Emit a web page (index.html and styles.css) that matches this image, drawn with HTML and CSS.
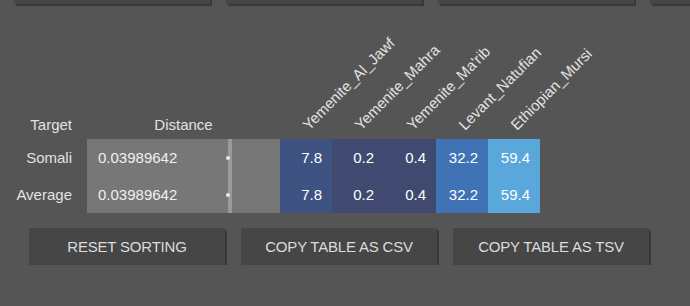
FILE: index.html
```html
<!DOCTYPE html>
<html lang="en">
<head>
<meta charset="utf-8">
<title>Distance table</title>
<link rel="stylesheet" href="styles.css">
</head>
<body>
  <div class="toolbar toolbar-top">
    <button class="btn"></button>
    <button class="btn"></button>
    <button class="btn"></button>
    <button class="btn"></button>
  </div>

  <div class="grid">
    <div class="head head-target">Target</div>
    <div class="head head-distance">Distance</div>
    <div class="head head-pop"><span class="pop-label">Yemenite_Al_Jawf</span></div>
    <div class="head head-pop"><span class="pop-label">Yemenite_Mahra</span></div>
    <div class="head head-pop"><span class="pop-label">Yemenite_Ma'rib</span></div>
    <div class="head head-pop"><span class="pop-label">Levant_Natufian</span></div>
    <div class="head head-pop"><span class="pop-label">Ethiopian_Mursi</span></div>

    <div class="cell name">Somali</div>
    <div class="cell dist">0.03989642</div>
    <div class="cell spacer"><span class="knob"></span></div>
    <div class="cell val shade-1">7.8</div>
    <div class="cell val shade-2">0.2</div>
    <div class="cell val shade-2">0.4</div>
    <div class="cell val shade-3">32.2</div>
    <div class="cell val shade-4">59.4</div>

    <div class="cell name">Average</div>
    <div class="cell dist">0.03989642</div>
    <div class="cell spacer"><span class="knob"></span></div>
    <div class="cell val shade-1">7.8</div>
    <div class="cell val shade-2">0.2</div>
    <div class="cell val shade-2">0.4</div>
    <div class="cell val shade-3">32.2</div>
    <div class="cell val shade-4">59.4</div>
  </div>

  <div class="toolbar toolbar-bottom">
    <button class="btn">RESET SORTING</button>
    <button class="btn">COPY TABLE AS CSV</button>
    <button class="btn">COPY TABLE AS TSV</button>
  </div>
</body>
</html>
```

FILE: styles.css
```css
html, body {
  margin: 0;
  padding: 0;
  overflow: hidden;
}

body {
  background: #555555;
  font-family: "Liberation Sans", Arial, sans-serif;
  font-size: 15px;
  color: #e2e2e2;
}

/* button rows */
.toolbar {
  display: flex;
  gap: 16px;
}

.toolbar-top {
  margin-top: -33px;
  margin-bottom: -2px;
  padding-left: 14px;
  padding-bottom: 2px;
  overflow: hidden;
}

.toolbar-bottom {
  margin-top: 15px;
  padding-left: 29px;
}

.btn {
  flex: 0 0 196px;
  height: 37px;
  border: 0;
  padding: 0;
  background: #464646;
  box-shadow: 2px 2px 0 #393939;
  color: #dcdcdc;
  font-family: "Liberation Sans", Arial, sans-serif;
  font-size: 15px;
  letter-spacing: -0.2px;
}

/* results table */
.grid {
  display: grid;
  grid-template-columns: 87px 141px 52px repeat(5, 52px);
  grid-template-rows: 135px 37px 37px;
}

.head {
  display: flex;
  align-items: flex-end;
  padding-bottom: 6px;
  line-height: 17px;
}

.head-target {
  justify-content: flex-end;
  padding-right: 15px;
}

.head-distance {
  grid-column: span 2;
  justify-content: center;
}

.head-pop {
  padding-left: 31px;
  padding-bottom: 6px;
}

.pop-label {
  display: block;
  width: 0;
  white-space: nowrap;
  transform-origin: 0 100%;
  transform: rotate(-45deg);
}

.cell {
  display: flex;
  align-items: center;
}

.name {
  justify-content: flex-end;
  padding-right: 15px;
}

.dist {
  background: #777777;
  padding-left: 11px;
  color: #f0f0f0;
}

.spacer {
  position: relative;
  background: #777777;
  border-left: 4px solid #9a9a9a;
}

.knob {
  position: absolute;
  left: -6px;
  top: 50%;
  width: 4px;
  height: 4px;
  margin-top: -2px;
  border-radius: 50%;
  background: #e4e8f2;
}

.val {
  justify-content: flex-end;
  padding-right: 10px;
  color: #ffffff;
}

.shade-1 { background: #3f5383; }
.shade-2 { background: #404a70; }
.shade-3 { background: #3f73b5; }
.shade-4 { background: #5aa7dc; }
```
